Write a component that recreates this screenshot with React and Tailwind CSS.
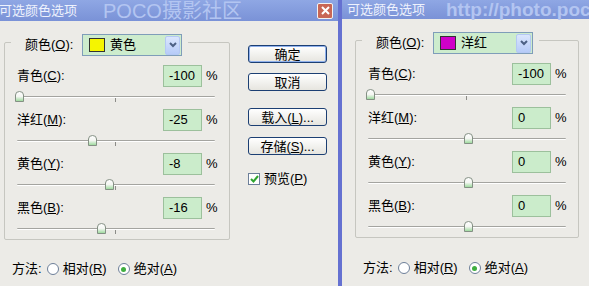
import React from "react";

const U = ({ c }) => <span className="underline">{c}</span>;

function Thumb() {
  return (
    <svg width="9" height="11" viewBox="0 0 9 11">
      <defs>
        <linearGradient id="tg" x1="0" y1="0" x2="0" y2="1">
          <stop offset="0" stopColor="#ffffff" />
          <stop offset="0.5" stopColor="#f4f6f2" />
          <stop offset="1" stopColor="#96d896" />
        </linearGradient>
      </defs>
      <path d="M0.5 4 Q0.5 0.5 4.5 0.5 Q8.5 0.5 8.5 4 L8.5 10.5 L0.5 10.5 Z" fill="url(#tg)" stroke="#849084" strokeWidth="1" />
    </svg>
  );
}

function Slider({ value, h }) {
  const x = 2 + (value + 100) * 0.98;
  return (
    <div className={`relative ml-[12px] w-[198px] ${h}`}>
      <div className="absolute left-0 right-0 top-[9px] h-[2px] border-t border-[#a4a4a0] bg-white rounded-[1px]" />
      <div className="absolute left-[98px] top-[11px] w-[1px] h-[4px] bg-[#8c8c88]" />
      <div className="absolute top-[4px]" style={{ left: x - 4.5 }}>
        <Thumb />
      </div>
    </div>
  );
}

function Row({ label, m, value, last }) {
  return (
    <div className="flex flex-col">
      <div className="flex items-center h-[22px] pl-[12px] pr-[13px]">
        <div className="flex-1 whitespace-nowrap">
          {label}(<U c={m} />):
        </div>
        <div className="w-[39px] h-[22px] border border-[#9cc09c] bg-[#cbeccb] flex items-center pl-[5px]">
          {value}
        </div>
        <div className="ml-[4px] w-[10px]">%</div>
      </div>
      <Slider value={value} h={last ? "h-[20px]" : "h-[22px]"} />
    </div>
  );
}

function Dropdown({ swatch, text }) {
  return (
    <div className="w-[100px] h-[22px] border border-[#7f9db9] bg-[#cdeccd] flex items-center pl-[6px] pr-[1px]">
      <div className={`w-[16px] h-[14px] border border-[#333] ${swatch}`} />
      <div className="ml-[5px] flex-1">{text}</div>
      <div className="w-[15px] h-[19px] rounded-[2px] border border-[#b4c8f4] bg-linear-to-b from-[#dbe6fd] to-[#b6cbf8] flex items-center justify-center">
        <svg width="8" height="6" viewBox="0 0 8 6">
          <path d="M1 1 L4 4 L7 1" fill="none" stroke="#4d6185" strokeWidth="2" />
        </svg>
      </div>
    </div>
  );
}

function Group({ swatch, text, values, width }) {
  const labels = [
    ["青色", "C"],
    ["洋红", "M"],
    ["黄色", "Y"],
    ["黑色", "B"],
  ];
  return (
    <div className={`${width} shrink-0 border border-[#c6c6c0] rounded-[2px] flex flex-col`}>
      <div className="-mt-[9px] ml-[6px] self-start flex items-center bg-[#ecebe7] pl-[14px] pr-[6px]">
        <div className="w-[57px] whitespace-nowrap">
          颜色(<U c="O" />):
        </div>
        <Dropdown swatch={swatch} text={text} />
      </div>
      <div className="mt-[9px] flex flex-col">
        {labels.map(([l, m], i) => (
          <Row key={m} label={l} m={m} value={values[i]} last={i === 3} />
        ))}
      </div>
    </div>
  );
}

function Btn({ children, def }) {
  return (
    <div
      className={`w-[79px] h-[18px] rounded-[3px] border border-[#1c3f73] bg-linear-to-b from-[#ffffff] to-[#e6e5df] flex items-center justify-center leading-none ${
        def ? "shadow-[inset_0_0_0_1px_#8fb0ec]" : ""
      }`}
    >
      {children}
    </div>
  );
}

function Radio({ on }) {
  return (
    <div className="w-[12px] h-[12px] rounded-full border border-[#6d7f99] bg-white flex items-center justify-center">
      {on && <div className="w-[5px] h-[5px] rounded-full bg-[#3fae3f]" />}
    </div>
  );
}

function Method({ pl, mt }) {
  return (
    <div className={`flex items-center h-[20px] ${pl} ${mt}`}>
      <span>方法:</span>
      <div className="ml-[5px]">
        <Radio />
      </div>
      <span className="ml-[4px]">
        相对(<U c="R" />)
      </span>
      <div className="ml-[11px]">
        <Radio on />
      </div>
      <span className="ml-[4px]">
        绝对(<U c="A" />)
      </span>
    </div>
  );
}

export default function App() {
  return (
    <div className="flex w-[589px] h-[286px] overflow-hidden bg-[#ecebe7] text-[13px] text-black font-['Liberation_Sans','Noto_Sans_CJK_SC',sans-serif]">
      {/* left dialog */}
      <div className="w-[338px] shrink-0 flex flex-col">
        <div className="h-[21px] flex items-center bg-linear-to-b from-[#8fa7e4] to-[#7a92d7] whitespace-nowrap">
          <span className="-ml-[1px] text-[#eef2fd]">可选颜色选项</span>
          <span className="ml-[26px] text-[20px] leading-none text-[#b3c5f1]">POCO摄影社区</span>
          <div className="ml-auto mr-[5px] w-[16px] h-[16px] rounded-[2px] border border-[#f2f2f2] bg-[#c86655] flex items-center justify-center">
            <svg width="9" height="9" viewBox="0 0 9 9">
              <path d="M1 1 L8 8 M8 1 L1 8" stroke="#fff" strokeWidth="2" />
            </svg>
          </div>
        </div>
        <div className="flex pl-[4px] pt-[21px]">
          <Group swatch="bg-[#f5f500]" text="黄色" values={[-100, -25, -8, -16]} width="w-[226px]" />
          <div className="ml-[18px] mt-[3px] flex flex-col">
            <Btn def>确定</Btn>
            <div className="mt-[10px]">
              <Btn>取消</Btn>
            </div>
            <div className="mt-[17px]">
              <Btn>
                载入(<U c="L" />)...
              </Btn>
            </div>
            <div className="mt-[11px]">
              <Btn>
                存储(<U c="S" />)...
              </Btn>
            </div>
            <div className="mt-[14px] flex items-center">
              <div className="w-[12px] h-[12px] border border-[#6d7f99] bg-white flex items-center justify-center">
                <svg width="9" height="8" viewBox="0 0 9 8">
                  <path d="M1 4 L3.5 6.5 L8 1" fill="none" stroke="#2fa52f" strokeWidth="2" />
                </svg>
              </div>
              <span className="ml-[4px]">
                预览(<U c="P" />)
              </span>
            </div>
          </div>
        </div>
        <Method pl="pl-[12px]" mt="mt-[19px]" />
      </div>

      <div className="w-[4px] shrink-0 bg-[#6571d1]" />

      {/* right dialog */}
      <div className="flex-1 min-w-0 flex flex-col">
        <div className="h-[19px] flex items-center bg-linear-to-b from-[#8fa7e4] to-[#7a92d7] whitespace-nowrap pl-[5px]">
          <span className="text-[#eef2fd]">可选颜色选项</span>
          <span className="ml-[21px] text-[19px] font-bold leading-none text-[#b3c5f1]">http://photo.poco.cn</span>
        </div>
        <div className="flex pl-[13px] pt-[21px]">
          <Group swatch="bg-[#d000c8]" text="洋红" values={[-100, 0, 0, 0]} width="w-[224px]" />
        </div>
        <Method pl="pl-[21px]" mt="mt-[20px]" />
      </div>
    </div>
  );
}
